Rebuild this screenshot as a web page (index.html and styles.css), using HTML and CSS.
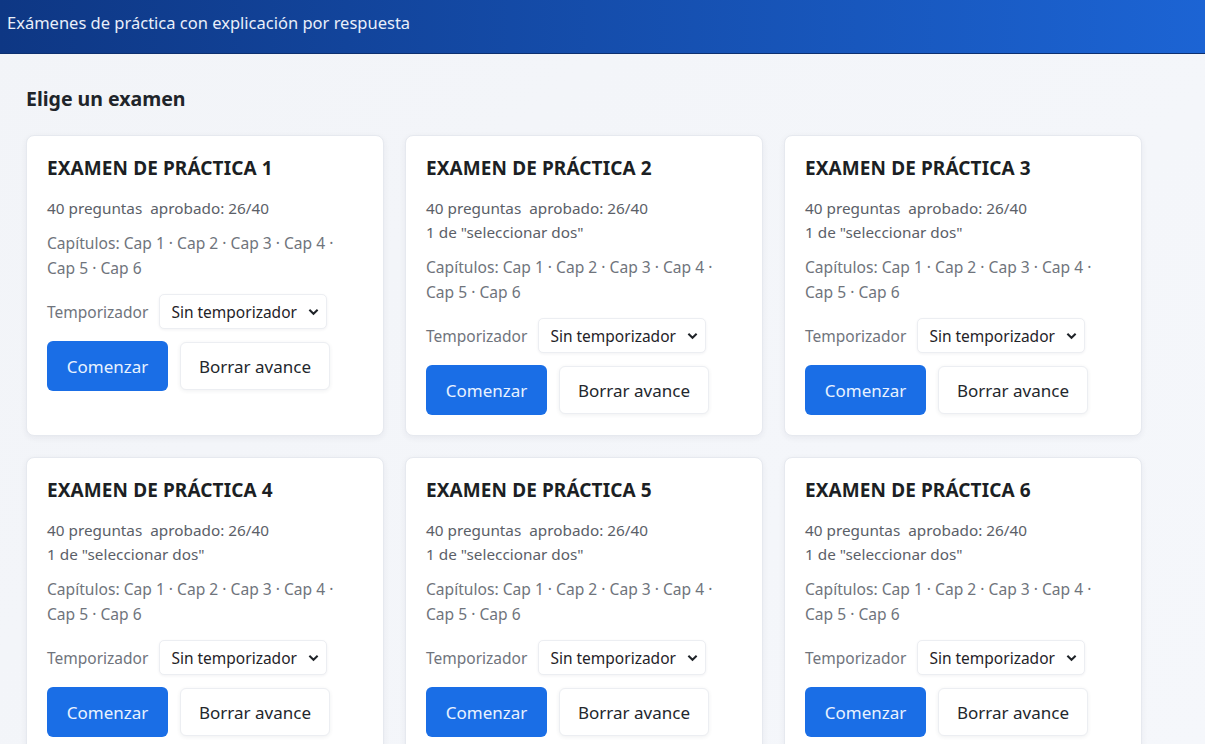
FILE: index.html
```html
<!DOCTYPE html>
<html lang="es">
<head>
    <meta charset="UTF-8">
    <meta name="viewport" content="width=device-width, initial-scale=1.0">
    <title>Exámenes de práctica</title>
    <link rel="stylesheet" href="styles.css">
</head>
<body>
    <header class="topbar">Exámenes de práctica con explicación por respuesta</header>
    <main class="page">
        <h2 class="page-title">Elige un examen</h2>
        <div class="exam-grid">
            <div class="exam-card">
                <h3 class="exam-title">EXAMEN DE PRÁCTICA 1</h3>
                <div class="exam-meta">40 preguntas&nbsp; aprobado: 26/40</div>
                <div class="exam-chapters">Capítulos: Cap 1 · Cap 2 · Cap 3 · Cap 4 · Cap 5 · Cap 6</div>
                <div class="timer-row">
                    <label>Temporizador</label>
                    <span class="select-wrap">
                        <select><option>Sin temporizador</option></select>
                        <svg class="chevron" viewBox="0 0 12 8"><path d="M1.5 1.5 6 6l4.5-4.5"/></svg>
                    </span>
                </div>
                <div class="actions">
                    <button class="btn btn-primary">Comenzar</button>
                    <button class="btn btn-light">Borrar avance</button>
                </div>
            </div>
            <div class="exam-card">
                <h3 class="exam-title">EXAMEN DE PRÁCTICA 2</h3>
                <div class="exam-meta">40 preguntas&nbsp; aprobado: 26/40<br>1 de "seleccionar dos"</div>
                <div class="exam-chapters">Capítulos: Cap 1 · Cap 2 · Cap 3 · Cap 4 · Cap 5 · Cap 6</div>
                <div class="timer-row">
                    <label>Temporizador</label>
                    <span class="select-wrap">
                        <select><option>Sin temporizador</option></select>
                        <svg class="chevron" viewBox="0 0 12 8"><path d="M1.5 1.5 6 6l4.5-4.5"/></svg>
                    </span>
                </div>
                <div class="actions">
                    <button class="btn btn-primary">Comenzar</button>
                    <button class="btn btn-light">Borrar avance</button>
                </div>
            </div>
            <div class="exam-card">
                <h3 class="exam-title">EXAMEN DE PRÁCTICA 3</h3>
                <div class="exam-meta">40 preguntas&nbsp; aprobado: 26/40<br>1 de "seleccionar dos"</div>
                <div class="exam-chapters">Capítulos: Cap 1 · Cap 2 · Cap 3 · Cap 4 · Cap 5 · Cap 6</div>
                <div class="timer-row">
                    <label>Temporizador</label>
                    <span class="select-wrap">
                        <select><option>Sin temporizador</option></select>
                        <svg class="chevron" viewBox="0 0 12 8"><path d="M1.5 1.5 6 6l4.5-4.5"/></svg>
                    </span>
                </div>
                <div class="actions">
                    <button class="btn btn-primary">Comenzar</button>
                    <button class="btn btn-light">Borrar avance</button>
                </div>
            </div>
            <div class="exam-card">
                <h3 class="exam-title">EXAMEN DE PRÁCTICA 4</h3>
                <div class="exam-meta">40 preguntas&nbsp; aprobado: 26/40<br>1 de "seleccionar dos"</div>
                <div class="exam-chapters">Capítulos: Cap 1 · Cap 2 · Cap 3 · Cap 4 · Cap 5 · Cap 6</div>
                <div class="timer-row">
                    <label>Temporizador</label>
                    <span class="select-wrap">
                        <select><option>Sin temporizador</option></select>
                        <svg class="chevron" viewBox="0 0 12 8"><path d="M1.5 1.5 6 6l4.5-4.5"/></svg>
                    </span>
                </div>
                <div class="actions">
                    <button class="btn btn-primary">Comenzar</button>
                    <button class="btn btn-light">Borrar avance</button>
                </div>
            </div>
            <div class="exam-card">
                <h3 class="exam-title">EXAMEN DE PRÁCTICA 5</h3>
                <div class="exam-meta">40 preguntas&nbsp; aprobado: 26/40<br>1 de "seleccionar dos"</div>
                <div class="exam-chapters">Capítulos: Cap 1 · Cap 2 · Cap 3 · Cap 4 · Cap 5 · Cap 6</div>
                <div class="timer-row">
                    <label>Temporizador</label>
                    <span class="select-wrap">
                        <select><option>Sin temporizador</option></select>
                        <svg class="chevron" viewBox="0 0 12 8"><path d="M1.5 1.5 6 6l4.5-4.5"/></svg>
                    </span>
                </div>
                <div class="actions">
                    <button class="btn btn-primary">Comenzar</button>
                    <button class="btn btn-light">Borrar avance</button>
                </div>
            </div>
            <div class="exam-card">
                <h3 class="exam-title">EXAMEN DE PRÁCTICA 6</h3>
                <div class="exam-meta">40 preguntas&nbsp; aprobado: 26/40<br>1 de "seleccionar dos"</div>
                <div class="exam-chapters">Capítulos: Cap 1 · Cap 2 · Cap 3 · Cap 4 · Cap 5 · Cap 6</div>
                <div class="timer-row">
                    <label>Temporizador</label>
                    <span class="select-wrap">
                        <select><option>Sin temporizador</option></select>
                        <svg class="chevron" viewBox="0 0 12 8"><path d="M1.5 1.5 6 6l4.5-4.5"/></svg>
                    </span>
                </div>
                <div class="actions">
                    <button class="btn btn-primary">Comenzar</button>
                    <button class="btn btn-light">Borrar avance</button>
                </div>
            </div>
        </div>
    </main>
</body>
</html>
```

FILE: styles.css
```css
body {
    margin: 0;
    font-family: "Noto Sans", "Open Sans", sans-serif;
    background: linear-gradient(135deg, #f2f4f8, #f5f7fb);
    color: #1f2328;
    min-height: 100vh;
}
.topbar {
    height: 54px;
    box-sizing: border-box;
    padding: 11px 7px 0;
    font-size: 16.5px;
    color: #e9effa;
    background: linear-gradient(90deg, #0e3784, #1c64d4);
    border-bottom: 1px solid #0d3070;
}
.page {
    padding: 0 26px;
}
.page-title {
    margin: 0;
    padding-top: 31px;
    font-size: 19.5px;
    line-height: 28px;
    font-weight: 700;
    color: #20242a;
}
.exam-grid {
    display: grid;
    grid-template-columns: repeat(3, 358px);
    gap: 21px;
    margin-top: 22px;
}
.exam-card {
    background: #fff;
    border: 1px solid #e6e9ef;
    border-radius: 8px;
    box-shadow: 0 2px 6px rgba(30, 40, 60, 0.06);
    padding: 20px;
}
.exam-title {
    margin: 0;
    font-size: 19px;
    line-height: 24px;
    font-weight: 700;
    letter-spacing: 0.1px;
    color: #1c1f24;
}
.exam-meta {
    margin-top: 16px;
    font-size: 15.3px;
    line-height: 24px;
    color: #5b6068;
}
.exam-chapters {
    margin-top: 11px;
    font-size: 15.6px;
    line-height: 24.5px;
    color: #6f747c;
    padding-right: 10px;
}
.timer-row {
    display: flex;
    align-items: center;
    gap: 11px;
    margin-top: 14px;
    font-size: 15.5px;
    color: #6f747c;
}
.select-wrap {
    position: relative;
    display: inline-flex;
}
.select-wrap select {
    appearance: none;
    -webkit-appearance: none;
    font-family: inherit;
    font-size: 15.5px;
    color: #1f2328;
    width: 168px;
    height: 35px;
    padding: 0 20px 0 11px;
    background: #fff;
    border: 1px solid #eceef2;
    border-radius: 5px;
    box-shadow: 0 1px 3px rgba(30, 40, 60, 0.06);
}
.chevron {
    position: absolute;
    right: 8px;
    top: 14px;
    width: 11px;
    height: 8px;
    fill: none;
    stroke: #1f2328;
    stroke-width: 2.2;
    pointer-events: none;
}
.actions {
    display: flex;
    align-items: center;
    gap: 12px;
    margin-top: 12px;
}
.btn {
    font-family: inherit;
    font-size: 17px;
    border-radius: 6px;
    cursor: pointer;
}
.btn-primary {
    height: 50px;
    width: 121px;
    background: #1a6ee6;
    color: #e8f2ff;
    border: none;
}
.btn-light {
    height: 48px;
    width: 150px;
    background: #fff;
    color: #23272d;
    border: 1px solid #eceef2;
    box-shadow: 0 1px 4px rgba(30, 40, 60, 0.07);
}
```
